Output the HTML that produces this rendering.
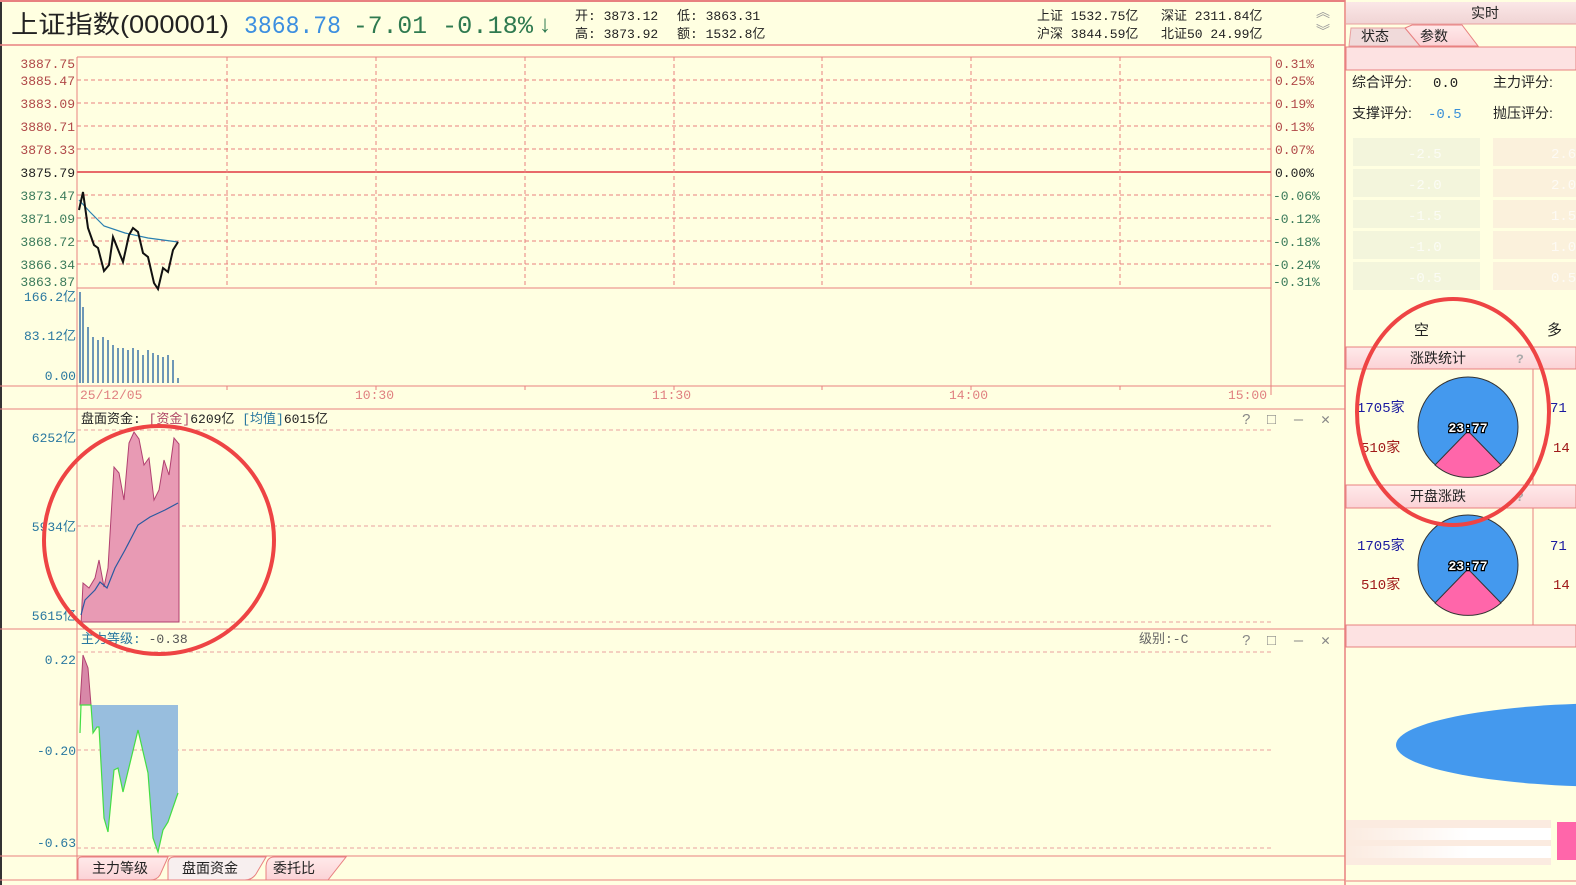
<!DOCTYPE html>
<html><head><meta charset="utf-8">
<style>
html,body{margin:0;padding:0;background:#ffffe1;overflow:hidden;width:1576px;height:885px;}
svg{display:block;font-family:"Liberation Mono","Noto Sans CJK SC",monospace;}
.c{font-family:"Liberation Sans","Noto Sans CJK SC",sans-serif;}
</style></head><body>
<svg width="1576" height="885" viewBox="0 0 1576 885" xmlns="http://www.w3.org/2000/svg">
<defs>
<linearGradient id="hb" x1="0" y1="0" x2="0" y2="1"><stop offset="0" stop-color="#fbe7e7"/><stop offset="1" stop-color="#f0d4d4"/></linearGradient>
<linearGradient id="tb" x1="0" y1="0" x2="0" y2="1"><stop offset="0" stop-color="#ffeaea"/><stop offset="1" stop-color="#fbd2d6"/></linearGradient>
<linearGradient id="blr" x1="0" y1="0" x2="1" y2="0"><stop offset="0" stop-color="#fff" stop-opacity="0"/><stop offset="0.6" stop-color="#fff"/><stop offset="1" stop-color="#fff"/></linearGradient>
</defs>
<rect width="1576" height="885" fill="#ffffe1"/>
<rect x="0" y="0" width="2" height="885" fill="#333"/>
<!-- header -->
<line x1="0" y1="1" x2="1345" y2="1" stroke="#e88080" stroke-width="2"/>
<line x1="0" y1="45" x2="1345" y2="45" stroke="#e88080" stroke-width="1.5"/>
<text x="11" y="33" font-size="25" fill="#222" class="c" textLength="218" lengthAdjust="spacingAndGlyphs">上证指数(000001)</text>
<text x="244" y="33" font-size="25" fill="#3d8fe0" textLength="97" lengthAdjust="spacingAndGlyphs">3868.78</text>
<text x="353" y="33" font-size="25" fill="#2f7a50" textLength="74" lengthAdjust="spacingAndGlyphs">-7.01</text>
<text x="442" y="33" font-size="25" fill="#2f7a50" textLength="91" lengthAdjust="spacingAndGlyphs">-0.18%</text>
<text x="539" y="32" font-size="24" fill="#2f7a50" class="c">↓</text>
<g font-size="13" fill="#222">
<text x="575" y="20">开: 3873.12</text><text x="677" y="20">低: 3863.31</text>
<text x="575" y="38">高: 3873.92</text><text x="677" y="38">额: 1532.8亿</text>
<text x="1037" y="20">上证 1532.75亿</text><text x="1161" y="20">深证 2311.84亿</text>
<text x="1037" y="38">沪深 3844.59亿</text><text x="1161" y="38">北证50 24.99亿</text>
</g>
<text x="1316" y="17" font-size="14" fill="#999">︽</text>
<text x="1316" y="36" font-size="14" fill="#999">︾</text>
<!-- main frame -->
<g stroke="#e88080" fill="none">
<line x1="1345" y1="0" x2="1345" y2="885" stroke-width="1.5"/>
<line x1="77" y1="57" x2="1271" y2="57"/>
<line x1="77" y1="57" x2="77" y2="880"/>
<line x1="1271" y1="57" x2="1271" y2="386"/>
<line x1="77" y1="288" x2="1271" y2="288"/>
<line x1="0" y1="386" x2="1345" y2="386"/>
<line x1="0" y1="409" x2="1345" y2="409"/>
<line x1="0" y1="629" x2="1345" y2="629"/>
<line x1="0" y1="856" x2="1345" y2="856"/>
<line x1="0" y1="880" x2="1345" y2="880"/>
<line x1="77" y1="172" x2="1271" y2="172" stroke="#e86a6a" stroke-width="2"/>
</g>
<g stroke="#e88080" stroke-dasharray="4,3" fill="none">
<line x1="77" y1="80" x2="1271" y2="80"/><line x1="77" y1="103" x2="1271" y2="103"/>
<line x1="77" y1="126" x2="1271" y2="126"/><line x1="77" y1="149" x2="1271" y2="149"/>
<line x1="77" y1="195" x2="1271" y2="195"/><line x1="77" y1="218" x2="1271" y2="218"/>
<line x1="77" y1="241" x2="1271" y2="241"/><line x1="77" y1="264" x2="1271" y2="264"/>
<line x1="227" y1="57" x2="227" y2="288"/><line x1="376" y1="57" x2="376" y2="288"/>
<line x1="525" y1="57" x2="525" y2="288"/><line x1="674" y1="57" x2="674" y2="288"/>
<line x1="822" y1="57" x2="822" y2="288"/><line x1="971" y1="57" x2="971" y2="288"/>
<line x1="1120" y1="57" x2="1120" y2="288"/>
</g>
<g stroke="#e8a0a0" stroke-dasharray="4,3" fill="none">
<line x1="77" y1="430" x2="1271" y2="430"/><line x1="77" y1="526" x2="1271" y2="526"/><line x1="77" y1="622" x2="1271" y2="622"/>
<line x1="77" y1="652" x2="1271" y2="652"/><line x1="77" y1="750" x2="1271" y2="750"/><line x1="77" y1="848" x2="1271" y2="848"/>
</g>
<g stroke="#e88080"><line x1="227" y1="386" x2="227" y2="390"/><line x1="376" y1="386" x2="376" y2="390"/><line x1="525" y1="386" x2="525" y2="390"/><line x1="674" y1="386" x2="674" y2="390"/><line x1="822" y1="386" x2="822" y2="390"/><line x1="971" y1="386" x2="971" y2="390"/><line x1="1120" y1="386" x2="1120" y2="390"/><line x1="1271" y1="386" x2="1271" y2="395"/></g>
<!-- price labels -->
<g font-size="13" fill="#b04848" text-anchor="end">
<text x="75" y="68">3887.75</text><text x="75" y="85">3885.47</text><text x="75" y="108">3883.09</text><text x="75" y="131">3880.71</text><text x="75" y="154">3878.33</text>
</g>
<text x="75" y="177" font-size="13" fill="#222" text-anchor="end">3875.79</text>
<g font-size="13" fill="#3a7a5a" text-anchor="end">
<text x="75" y="200">3873.47</text><text x="75" y="223">3871.09</text><text x="75" y="246">3868.72</text><text x="75" y="269">3866.34</text><text x="75" y="286">3863.87</text>
</g>
<g font-size="13" fill="#b04848"><text x="1275" y="68">0.31%</text><text x="1275" y="85">0.25%</text><text x="1275" y="108">0.19%</text><text x="1275" y="131">0.13%</text><text x="1275" y="154">0.07%</text></g>
<text x="1275" y="177" font-size="13" fill="#222">0.00%</text>
<g font-size="13" fill="#3a7a5a"><text x="1273" y="200">-0.06%</text><text x="1273" y="223">-0.12%</text><text x="1273" y="246">-0.18%</text><text x="1273" y="269">-0.24%</text><text x="1273" y="286">-0.31%</text></g>
<g font-size="13" fill="#2a78a0" text-anchor="end"><text x="76" y="301">166.2亿</text><text x="76" y="340">83.12亿</text><text x="76" y="380">0.00</text></g>
<!-- price line -->
<polyline fill="none" stroke="#2a80b0" stroke-width="1.2" points="79,200 90,212 104,226 125,233 148,238 178,242"/>
<polyline fill="none" stroke="#111" stroke-width="2" points="79,210 83,192 88,228 94,245 98,248 104,271 109,265 113,237 123,262 129,235 133,228 138,232 143,253 148,257 154,283 158,289 163,268 168,272 173,250 178,242"/>
<!-- volume bars -->
<g stroke="#1f5f9f" stroke-width="1.3">
<line x1="80" y1="292" x2="80" y2="383"/><line x1="83" y1="307" x2="83" y2="383"/><line x1="88" y1="327" x2="88" y2="383"/><line x1="93" y1="337" x2="93" y2="383"/><line x1="98" y1="340" x2="98" y2="383"/><line x1="103" y1="337" x2="103" y2="383"/><line x1="108" y1="340" x2="108" y2="383"/><line x1="113" y1="345" x2="113" y2="383"/><line x1="118" y1="348" x2="118" y2="383"/><line x1="123" y1="348" x2="123" y2="383"/><line x1="128" y1="350" x2="128" y2="383"/><line x1="133" y1="348" x2="133" y2="383"/><line x1="138" y1="350" x2="138" y2="383"/><line x1="143" y1="355" x2="143" y2="383"/><line x1="148" y1="350" x2="148" y2="383"/><line x1="153" y1="353" x2="153" y2="383"/><line x1="158" y1="355" x2="158" y2="383"/><line x1="163" y1="357" x2="163" y2="383"/><line x1="168" y1="355" x2="168" y2="383"/><line x1="173" y1="360" x2="173" y2="383"/><line x1="178" y1="378" x2="178" y2="383"/>
</g>
<g font-size="13" fill="#e08080"><text x="80" y="399">25/12/05</text><text x="355" y="399">10:30</text><text x="652" y="399">11:30</text><text x="949" y="399">14:00</text><text x="1228" y="399">15:00</text></g>
<!-- panel 2 -->
<text x="81" y="423" font-size="13" fill="#222">盘面资金: <tspan fill="#b04868">[资金]</tspan>6209亿 <tspan fill="#2a78a0">[均值]</tspan>6015亿</text>
<g font-size="13" fill="#2a78a0" text-anchor="end"><text x="76" y="442">6252亿</text><text x="76" y="531">5934亿</text><text x="76" y="620">5615亿</text></g>
<polygon fill="#e89ab4" stroke="#b04070" stroke-width="1" points="79,622 81,625 83,583 89,588 95,578 99,560 104,587 108,568 114,467 119,473 124,500 129,443 134,432 139,439 144,465 149,458 154,500 159,490 164,460 169,475 174,438 179,444 179,622"/>
<polyline fill="none" stroke="#2a5aa0" stroke-width="1.2" points="81,615 85,600 95,590 100,582 107,588 115,568 125,550 138,525 150,517 165,510 178,503"/>
<g font-size="15" fill="#888"><text x="1242" y="424">?</text><text x="1267" y="424">□</text><text x="1294" y="424">—</text><text x="1321" y="424">✕</text></g>
<!-- panel 3 -->
<text x="81" y="643" font-size="13" fill="#2a78a0">主力等级: <tspan fill="#555">-0.38</tspan></text>
<text x="1139" y="643" font-size="13" fill="#666">级别:-C</text>
<g font-size="15" fill="#888"><text x="1242" y="645">?</text><text x="1267" y="645">□</text><text x="1294" y="645">—</text><text x="1321" y="645">✕</text></g>
<g font-size="13" fill="#2a78a0" text-anchor="end"><text x="76" y="664">0.22</text><text x="76" y="755">-0.20</text><text x="76" y="847">-0.63</text></g>
<polygon fill="#d888a8" stroke="#b04070" points="80,705 83,655 88,668 91,705"/>
<polygon fill="#98bede" points="91,705 178,705 178,793 168,822 163,830 158,852 153,838 148,773 138,730 123,792 118,768 114,770 108,832 104,818 99,727 97,727 93,733"/>
<polyline fill="none" stroke="#44dd44" stroke-width="1.2" points="80,733 81,705 80,705 91,705 93,733 97,727 99,727 104,818 108,832 114,770 118,768 123,792 138,730 148,773 153,838 158,852 163,830 168,822 178,793"/>
<!-- bottom tabs -->
<path d="M78,880 L78,860 Q78,857 82,857 L168,857 L160,875 Q157,880 150,880 Z" fill="url(#tb)" stroke="#e88080"/>
<path d="M168,880 L168,862 Q169,857 174,857 L266,857 L256,874 Q252,880 245,880 Z" fill="#f7efef" stroke="#e88080"/>
<path d="M266,880 L266,866 Q267,857 274,857 L346,857 L328,880 Z" fill="url(#tb)" stroke="#e88080"/>
<g font-size="14" fill="#222" class="c"><text x="92" y="873">主力等级</text><text x="182" y="873">盘面资金</text><text x="273" y="873">委托比</text></g>
<!-- right panel -->
<rect x="1346" y="2" width="230" height="22" fill="url(#hb)"/>
<line x1="1346" y1="24" x2="1576" y2="24" stroke="#e8a0a0"/>
<text x="1471" y="18" font-size="14" fill="#222" class="c">实时</text>
<path d="M1349,46 L1351,28 L1405,28 L1420,46 Z" fill="#f0dada" stroke="#e8a0a0"/>
<path d="M1405,28 L1412,25 L1462,25 L1478,46 L1420,46 Z" fill="url(#tb)" stroke="#e88080"/>
<g font-size="14" fill="#222" class="c"><text x="1361" y="41">状态</text><text x="1420" y="41">参数</text></g>
<rect x="1346" y="47" width="230" height="23" fill="#fde2e2" stroke="#e88080"/>
<g font-size="14" fill="#222" class="c"><text x="1352" y="87">综合评分:</text><text x="1493" y="87">主力评分:</text><text x="1352" y="118">支撑评分:</text><text x="1493" y="118">抛压评分:</text></g>
<text x="1433" y="87" font-size="14" fill="#222">0.0</text>
<text x="1428" y="118" font-size="14" fill="#3a90d8">-0.5</text>
<g fill="#f3f5dc"><rect x="1353" y="138" width="127" height="28"/><rect x="1353" y="169" width="127" height="28"/><rect x="1353" y="200" width="127" height="28"/><rect x="1353" y="231" width="127" height="28"/><rect x="1353" y="262" width="127" height="28"/></g>
<g fill="#fbf1dc"><rect x="1493" y="138" width="83" height="28"/><rect x="1493" y="169" width="83" height="28"/><rect x="1493" y="200" width="83" height="28"/><rect x="1493" y="231" width="83" height="28"/><rect x="1493" y="262" width="83" height="28"/></g>
<g font-size="14" fill="#fff" opacity="0.7"><text x="1408" y="158">-2.5</text><text x="1408" y="189">-2.0</text><text x="1408" y="220">-1.5</text><text x="1408" y="251">-1.0</text><text x="1408" y="282">-0.5</text><text x="1551" y="158">2.6</text><text x="1551" y="189">2.0</text><text x="1551" y="220">1.5</text><text x="1551" y="251">1.0</text><text x="1551" y="282">0.5</text></g>
<g font-size="15" fill="#222" class="c"><text x="1414" y="335">空</text><text x="1547" y="335">多</text></g>
<rect x="1346" y="347" width="230" height="22" fill="url(#tb)" stroke="#e88080"/>
<text x="1410" y="363" font-size="14" fill="#222" class="c">涨跌统计</text>
<text x="1516" y="363" font-size="13" fill="#aaa" font-weight="bold">?</text>
<line x1="1533" y1="369" x2="1533" y2="485" stroke="#e88080"/>
<rect x="1346" y="485" width="230" height="23" fill="url(#tb)" stroke="#e88080"/>
<text x="1410" y="501" font-size="14" fill="#222" class="c">开盘涨跌</text>
<text x="1516" y="501" font-size="13" fill="#aaa" font-weight="bold">?</text>
<line x1="1533" y1="508" x2="1533" y2="625" stroke="#e88080"/>
<rect x="1346" y="625" width="230" height="22" fill="#fde2e2" stroke="#e88080"/>
<g font-size="14"><text x="1357" y="412" fill="#1a1aa0">1705家</text><text x="1361" y="452" fill="#a01a1a">510家</text><text x="1550" y="412" fill="#1a1aa0">71</text><text x="1553" y="452" fill="#a01a1a">14</text>
<text x="1357" y="550" fill="#1a1aa0">1705家</text><text x="1361" y="589" fill="#a01a1a">510家</text><text x="1550" y="550" fill="#1a1aa0">71</text><text x="1553" y="589" fill="#a01a1a">14</text></g>
<g stroke="#333" stroke-width="1">
<circle cx="1468" cy="427" r="50" fill="#4499ee"/>
<path d="M1468,431 L1435,465 A50,50 0 0 0 1501,465 Z" fill="#ff66aa"/>
<circle cx="1468" cy="565" r="50" fill="#4499ee"/>
<path d="M1468,569 L1435,603 A50,50 0 0 0 1501,603 Z" fill="#ff66aa"/>
</g>
<g font-size="13" font-weight="bold" fill="#fff" stroke="#000" stroke-width="2.5" paint-order="stroke" text-anchor="middle"><text x="1468" y="432">23:77</text><text x="1468" y="570">23:77</text></g>
<ellipse cx="1620" cy="745" rx="224" ry="42" fill="#4499ee"/>
<rect x="1346" y="820" width="205" height="45" fill="#f8d8e0" opacity="0.5"/>
<rect x="1346" y="828" width="205" height="12" fill="url(#blr)"/>
<rect x="1346" y="846" width="205" height="12" fill="url(#blr)"/>
<rect x="1557" y="822" width="19" height="38" fill="#ff66aa"/>
<line x1="1346" y1="881" x2="1576" y2="881" stroke="#e88080"/>
<!-- annotation circles -->
<ellipse cx="159" cy="540" rx="115" ry="114" fill="none" stroke="#ee4444" stroke-width="4"/>
<ellipse cx="1453" cy="412" rx="96" ry="113" fill="none" stroke="#ee4444" stroke-width="4"/>
</svg>
</body></html>
